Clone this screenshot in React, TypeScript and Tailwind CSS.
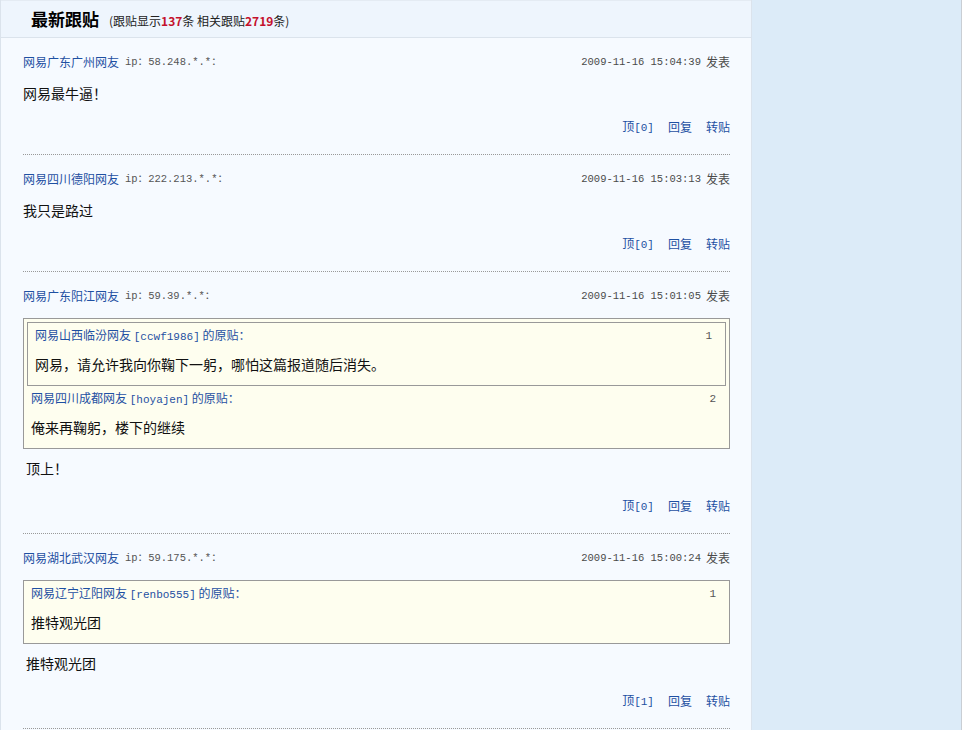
import React from "react";

// Types for posts and quoted posts
interface Quote {
  user: string;
  nick: string;
  text: string;
  floor: number;
}

interface Post {
  id: number;
  user: string;
  ip: string;
  time: string;
  text: string;
  up: number;
  quotes?: Quote[];
}

const posts: Post[] = [
  {
    id: 1,
    user: "网易广东广州网友",
    ip: "58.248.*.*",
    time: "2009-11-16 15:04:39",
    text: "网易最牛逼！",
    up: 0,
  },
  {
    id: 2,
    user: "网易四川德阳网友",
    ip: "222.213.*.*",
    time: "2009-11-16 15:03:13",
    text: "我只是路过",
    up: 0,
  },
  {
    id: 3,
    user: "网易广东阳江网友",
    ip: "59.39.*.*",
    time: "2009-11-16 15:01:05",
    text: "顶上！",
    up: 0,
    quotes: [
      { user: "网易山西临汾网友", nick: "ccwf1986", text: "网易，请允许我向你鞠下一躬，哪怕这篇报道随后消失。", floor: 1 },
      { user: "网易四川成都网友", nick: "hoyajen", text: "俺来再鞠躬，楼下的继续", floor: 2 },
    ],
  },
  {
    id: 4,
    user: "网易湖北武汉网友",
    ip: "59.175.*.*",
    time: "2009-11-16 15:00:24",
    text: "推特观光团",
    up: 1,
    quotes: [{ user: "网易辽宁辽阳网友", nick: "renbo555", text: "推特观光团", floor: 1 }],
  },
];

const cjk = { fontFamily: '"Noto Sans CJK SC", "Liberation Sans", sans-serif' };
const mono = { fontFamily: '"Liberation Mono", "Noto Sans CJK SC", monospace' };

// quotes are nested: the last one wraps all the earlier ones
const QuoteBox = ({ quotes }: { quotes: Quote[] }) => {
  const last = quotes[quotes.length - 1];
  const rest = quotes.slice(0, -1);
  return (
    <div className="border border-[#999] bg-[#fefeef] p-[3px]">
      {rest.length > 0 && <QuoteBox quotes={rest} />}
      <div className={`px-[4px] pb-[7px] ${rest.length > 0 ? "pt-[3px]" : ""}`}>
        <div className="flex h-[20px] items-center justify-between pr-[6px] text-[12px] leading-[20px]">
          <span className="text-[#1e50a2]">
            {last.user}{" "}
            <span className="text-[11px]" style={mono}>
              [{last.nick}]
            </span>{" "}
            的原贴：
          </span>
          <span className="text-[11px] text-[#555]" style={mono}>
            {last.floor}
          </span>
        </div>
        <p className="mt-[7px] h-[22px] text-[14px] leading-[22px] text-[#111]">{last.text}</p>
      </div>
    </div>
  );
};

const PostItem = ({ post }: { post: Post }) => {
  const hasQuote = !!post.quotes;
  return (
    <div className="border-b border-dotted border-[#999] pt-[14px] pb-[17px]">
      <div className="flex h-[20px] items-center justify-between leading-[20px]">
        <div className="flex items-center">
          <span className="text-[12px] text-[#1e50a2]">{post.user}</span>
          <span className="ml-[6px] text-[10.5px] text-[#555]" style={mono}>
            ip：{post.ip}：
          </span>
        </div>
        <div className="flex items-center text-[#4a4a4a]">
          <span className="text-[10.5px]" style={mono}>
            {post.time}
          </span>
          <span className="ml-[5px] text-[12px]">发表</span>
        </div>
      </div>

      {hasQuote ? (
        <>
          <div className="mt-[12px]">
            <QuoteBox quotes={post.quotes!} />
          </div>
          <p className="mt-[8px] h-[22px] pl-[3px] text-[14px] leading-[22px] text-[#111]">{post.text}</p>
        </>
      ) : (
        <p className="mt-[10px] h-[22px] text-[14px] leading-[22px] text-[#111]">{post.text}</p>
      )}

      <div
        className={`flex h-[20px] items-center justify-end gap-[14px] text-[12px] leading-[20px] text-[#1e50a2] ${
          hasQuote ? "mt-[17px]" : "mt-[13px]"
        }`}
      >
        <span>
          顶<span style={mono} className="text-[11px]">[{post.up}]</span>
        </span>
        <span>回复</span>
        <span>转贴</span>
      </div>
    </div>
  );
};

export default function App() {
  return (
    <div className="flex min-h-screen w-full" style={cjk}>
      {/* main column */}
      <div className="w-[752px] shrink-0 border-x border-[#dbe3ec] bg-[#f6faff]">
        <div className="flex h-[38px] items-center border-y border-[#dbe3ec] border-t-[#e4ebf3] bg-[#eef5fd] pl-[30px]">
          <h2 className="text-[17px] font-bold text-black">最新跟贴</h2>
          <span className="ml-[10px] mt-[3px] text-[12px] text-[#222]">
            (跟贴显示<b className="text-[#c4102c]">137</b>条 相关跟贴<b className="text-[#c4102c]">2719</b>条)
          </span>
        </div>
        <div className="pl-[22px] pr-[21px]">
          {posts.map((p) => (
            <PostItem key={p.id} post={p} />
          ))}
        </div>
      </div>
      {/* right side */}
      <div className="flex-1 border-r border-[#c9ced4] bg-[#dcebf8]"></div>
    </div>
  );
}
